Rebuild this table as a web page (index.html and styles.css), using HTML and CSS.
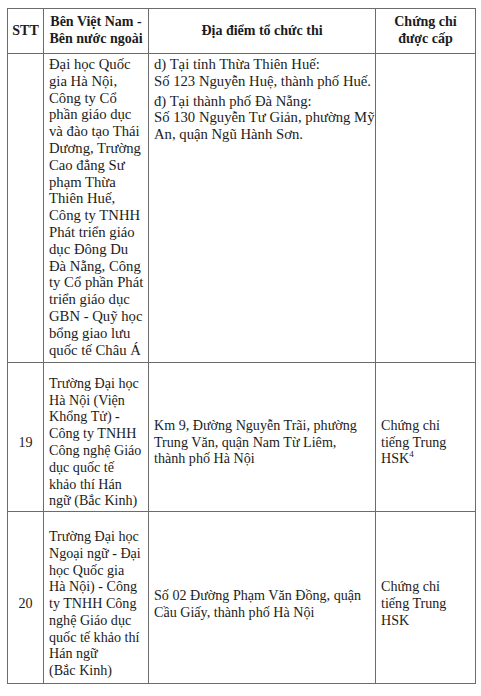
FILE: index.html
```html
<!DOCTYPE html>
<html lang="vi">
<head>
<meta charset="utf-8">
<title>Bảng địa điểm tổ chức thi</title>
<link rel="stylesheet" href="styles.css">
</head>
<body>
<table class="doc-table">
  <colgroup>
    <col class="c-stt">
    <col class="c-party">
    <col class="c-place">
    <col class="c-cert">
  </colgroup>
  <thead>
    <tr class="row-head">
      <th>STT</th>
      <th>Bên Việt Nam -<br>Bên nước ngoài</th>
      <th>Địa điểm tổ chức thi</th>
      <th>Chứng chỉ<br>được cấp</th>
    </tr>
  </thead>
  <tbody>
    <tr class="row-cont">
      <td></td>
      <td>Đại học Quốc<br>gia Hà Nội,<br>Công ty Cổ<br>phần giáo dục<br>và đào tạo Thái<br>Dương, Trường<br>Cao đẳng Sư<br>phạm Thừa<br>Thiên Huế,<br>Công ty TNHH<br>Phát triển giáo<br>dục Đông Du<br>Đà Nẵng, Công<br>ty Cổ phần Phát<br>triển giáo dục<br>GBN - Quỹ học<br>bổng giao lưu<br>quốc tế Châu Á</td>
      <td>
        <p class="para">d) Tại tỉnh Thừa Thiên Huế:<br>Số 123 Nguyễn Huệ, thành phố Huế.</p>
        <p class="para para-gap">đ) Tại thành phố Đà Nẵng:<br>Số 130 Nguyễn Tư Giản, phường Mỹ<br>An, quận Ngũ Hành Sơn.</p>
      </td>
      <td></td>
    </tr>
    <tr class="row-item row-19">
      <td class="num">19</td>
      <td>Trường Đại học<br>Hà Nội (Viện<br>Khổng Tử) -<br>Công ty TNHH<br>Công nghệ Giáo<br>dục quốc tế<br>khảo thí Hán<br>ngữ (Bắc Kinh)</td>
      <td>Km 9, Đường Nguyễn Trãi, phường<br>Trung Văn, quận Nam Từ Liêm,<br>thành phố Hà Nội</td>
      <td>Chứng chỉ<br>tiếng Trung<br>HSK<sup class="note">4</sup></td>
    </tr>
    <tr class="row-item row-20">
      <td class="num">20</td>
      <td>Trường Đại học<br>Ngoại ngữ - Đại<br>học Quốc gia<br>Hà Nội) - Công<br>ty TNHH Công<br>nghệ Giáo dục<br>quốc tế khảo thí<br>Hán ngữ<br>(Bắc Kinh)</td>
      <td>Số 02 Đường Phạm Văn Đồng, quận<br>Cầu Giấy, thành phố Hà Nội</td>
      <td>Chứng chỉ<br>tiếng Trung<br>HSK</td>
    </tr>
  </tbody>
</table>
</body>
</html>
```

FILE: styles.css
```css
html, body {
  background: #ffffff;
}

body {
  margin: 8px 0 0 7px;
  font-family: "Liberation Serif", "Times New Roman", serif;
  color: #1c1c1c;
}

.doc-table {
  border-collapse: collapse;
  table-layout: fixed;
  width: 468px;
  font-size: 14.7px;
  line-height: 16.8px;
}

.c-stt { width: 36px; }
.c-party { width: 105px; }
.c-place { width: 227px; }
.c-cert { width: 100px; }

.doc-table th,
.doc-table td {
  border: 1px solid #6c6c6c;
  white-space: nowrap;
  overflow: hidden;
}

.doc-table th {
  font-size: 14px;
  font-weight: bold;
  text-align: center;
  vertical-align: middle;
  padding: 5px 2px 5px;
  line-height: 16.7px;
}

.row-head { height: 45px; }

.doc-table td {
  text-align: left;
  padding: 0 4px 0 5px;
}

.row-cont td {
  vertical-align: top;
  padding-top: 2px;
}

.row-cont { height: 309px; }

.para {
  margin: 0;
}

.para-gap {
  margin-top: 3px;
}

.row-item td {
  vertical-align: middle;
  font-size: 14.1px;
  padding-top: 11px;
  padding-bottom: 1px;
}

.row-19 { height: 149px; }
.row-20 { height: 172px; }

.row-20 td {
  padding-top: 13px;
}

.doc-table td.num {
  text-align: center;
  padding-left: 2px;
  padding-right: 2px;
}

.note {
  font-size: 9px;
  line-height: 0;
  vertical-align: 6px;
}
```
